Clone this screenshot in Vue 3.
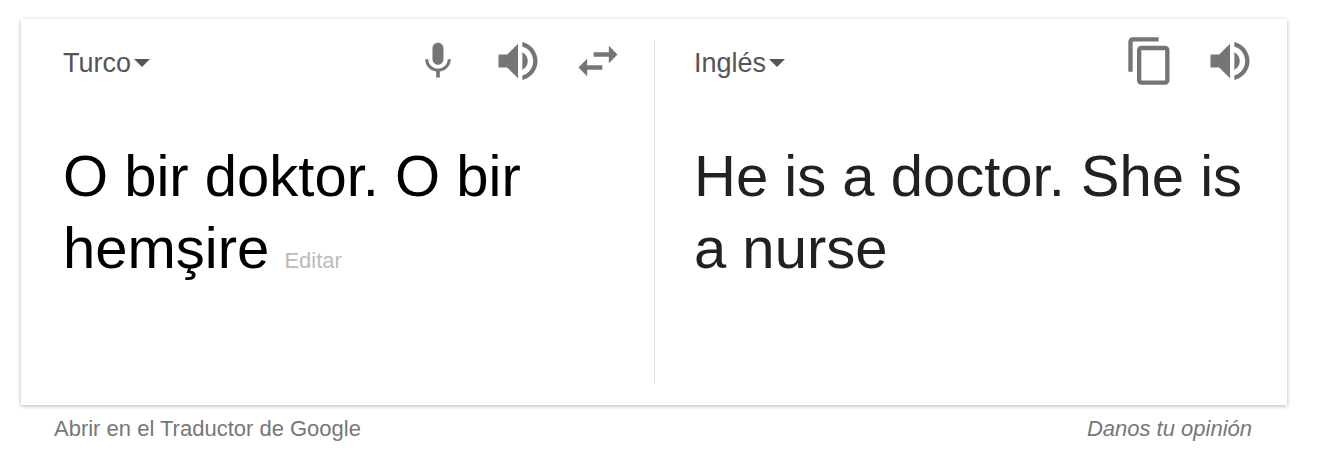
<template>
  <div class="page">
    <div class="card">
      <div class="panel source">
        <div class="head">
          <span class="lang">Turco<i class="caret"></i></span>
          <div class="tools">
            <svg class="ico mic" viewBox="0 0 24 24"><path :d="icons.mic" /></svg>
            <svg class="ico speak" viewBox="0 0 24 24"><path :d="icons.volume" /></svg>
            <svg class="ico swap" viewBox="0 0 24 24"><path :d="icons.swap" /></svg>
          </div>
        </div>
        <div class="text">O bir doktor. O bir hemşire <span class="edit">Editar</span></div>
      </div>
      <div class="panel target">
        <div class="head">
          <span class="lang">Inglés<i class="caret"></i></span>
          <div class="tools">
            <svg class="ico copy" viewBox="0 0 24 24"><path :d="icons.copy" /></svg>
            <svg class="ico swap" viewBox="0 0 24 24"><path :d="icons.volume" /></svg>
          </div>
        </div>
        <div class="text">He is a doctor. She is a nurse</div>
      </div>
    </div>
    <div class="foot">
      <span>Abrir en el Traductor de Google</span>
      <em>Danos tu opinión</em>
    </div>
  </div>
</template>

<script setup>
const icons = {
  mic: 'M12 14c1.66 0 2.99-1.34 2.99-3L15 5c0-1.66-1.34-3-3-3S9 3.34 9 5v6c0 1.66 1.34 3 3 3zm5.3-3c0 3-2.54 5.1-5.3 5.1S6.7 14 6.7 11H5c0 3.41 2.72 6.23 6 6.72V21h2v-3.28c3.28-.48 6-3.3 6-6.72h-1.7z',
  volume: 'M3 9v6h4l5 5V4L7 9H3zm13.5 3c0-1.77-1.02-3.29-2.5-4.03v8.05c1.48-.73 2.5-2.25 2.5-4.02zM14 3.23v2.06c2.89.86 5 3.54 5 6.71s-2.11 5.85-5 6.71v2.06c4.01-.91 7-4.49 7-8.77s-2.99-7.86-7-8.77z',
  swap: 'M6.99 11L3 15l3.99 4v-3H14v-2H6.99v-3zM21 9l-4-4v3h-7v2h7v3l4-4z',
  copy: 'M16 1H4c-1.1 0-2 .9-2 2v14h2V3h12V1zm3 4H8c-1.1 0-2 .9-2 2v14c0 1.1.9 2 2 2h11c1.1 0 2-.9 2-2V7c0-1.1-.9-2-2-2zm0 16H8V7h11v14z',
}
</script>

<style>
body {
  margin: 0;
  background: #fff;
}
</style>

<style scoped>
.page {
  width: 1322px;
  height: 458px;
  padding: 19px 35px 0 21px;
  box-sizing: border-box;
  font-family: 'Liberation Sans', Arial, sans-serif;
  overflow: hidden;
}
.card {
  display: flex;
  height: 386px;
  padding: 21px 0;
  box-sizing: border-box;
  background: #fff;
  box-shadow: 0 1px 4px rgba(0, 0, 0, 0.3);
}
.panel {
  flex: 1;
  padding-left: 42px;
  min-width: 0;
}
.source {
  flex: 0 0 634px;
  box-sizing: border-box;
  border-right: 1px solid #e0e0e0;
}
.target {
  padding-left: 39px;
}
.head {
  display: flex;
  justify-content: space-between;
  align-items: center;
  height: 44px;
  padding-right: 30px;
}
.target .head {
  padding-right: 31px;
}
.lang {
  display: flex;
  align-items: center;
  margin-top: 2px;
  font-size: 27px;
  color: #555;
}
.caret {
  margin-left: 3px;
  border-left: 8px solid transparent;
  border-right: 8px solid transparent;
  border-top: 8px solid #555;
}
.tools {
  display: flex;
  align-items: center;
  margin-bottom: 3px;
}
.ico {
  display: block;
  width: 52px;
  height: 52px;
  fill: #757575;
}
.mic {
  width: 44px;
  height: 44px;
  margin-right: 32px;
}
.swap {
  margin-left: 28px;
}
.text {
  margin-top: 56px;
  font-size: 58px;
  line-height: 72px;
  color: #000;
}
.target .text {
  color: #212121;
  padding-right: 30px;
}
.edit {
  margin-left: -1px;
  font-size: 22px;
  line-height: 1;
  color: #bbb;
}
.foot {
  display: flex;
  justify-content: space-between;
  padding: 11px 35px 0 33px;
  font-size: 22px;
  color: #777;
}
.foot em {
  font-style: italic;
}
</style>
